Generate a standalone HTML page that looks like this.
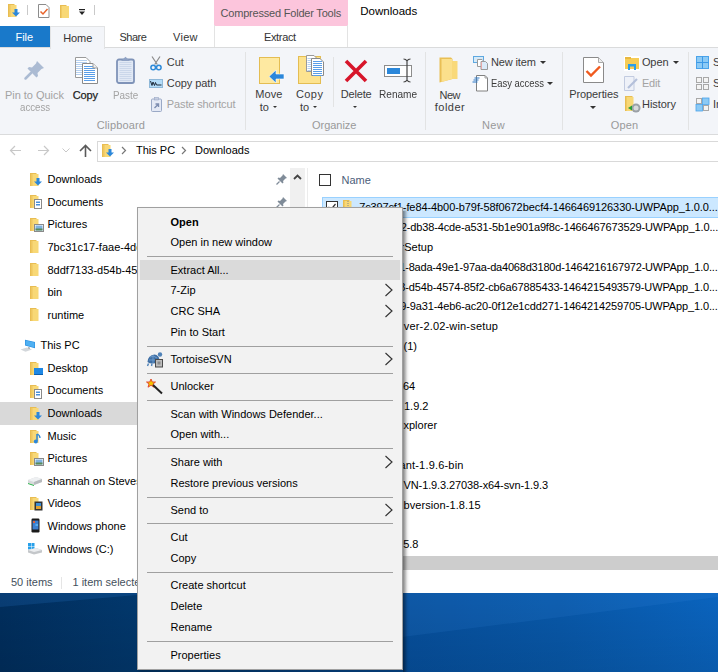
<!DOCTYPE html>
<html><head><meta charset="utf-8"><style>
html,body{margin:0;padding:0;background:#fff}
#root{position:relative;width:718px;height:672px;overflow:hidden;background:#fff;font-family:"Liberation Sans",sans-serif}
.t{position:absolute;white-space:nowrap;line-height:1.149;}
</style></head><body><div id="root">
<div style="position:absolute;left:0;top:0;width:718px;height:47px;background:#fff"></div>
<div style="position:absolute;left:214px;top:0;width:134px;height:25.5px;background:#fcc5dc"></div>
<div class="t" style="left:220.60px;top:7.37px;font-size:11px;color:#555;font-weight:normal;letter-spacing:-0.206px;">Compressed Folder Tools</div>
<div class="t" style="left:360.30px;top:4.91px;font-size:11.5px;color:#000;font-weight:normal;">Downloads</div>
<div style="position:absolute;left:0;top:26px;width:50px;height:21px;background:#1979ca"></div>
<div class="t" style="left:15.60px;top:30.87px;font-size:11px;color:#fff;font-weight:normal;letter-spacing:-0.078px;">File</div>
<div class="t" style="left:119.50px;top:30.87px;font-size:11px;color:#333;font-weight:normal;letter-spacing:-0.515px;">Share</div>
<div class="t" style="left:173.00px;top:30.87px;font-size:11px;color:#333;font-weight:normal;letter-spacing:0.281px;">View</div>
<div style="position:absolute;left:214px;top:25px;width:134px;height:22px;border-left:1px solid #e3e3e3;border-right:1px solid #e3e3e3;box-sizing:border-box"></div>
<div class="t" style="left:264.00px;top:31.17px;font-size:11px;color:#333;font-weight:normal;letter-spacing:-0.356px;">Extract</div>
<div style="position:absolute;left:0;top:47px;width:718px;height:88px;background:#f3f5f9;border-top:1px solid #dadbdc;border-bottom:1px solid #dadbdc;box-sizing:border-box"></div>
<div style="position:absolute;left:50px;top:26px;width:55px;height:23px;background:#f3f5f9;border:1px solid #e2e3e4;border-bottom:none;box-sizing:border-box"></div>
<div class="t" style="left:63.20px;top:31.57px;font-size:11px;color:#333;font-weight:normal;letter-spacing:-0.081px;">Home</div>
<div style="position:absolute;left:245px;top:52px;width:1px;height:78px;background:#e2e3e4"></div>
<div style="position:absolute;left:425px;top:52px;width:1px;height:78px;background:#e2e3e4"></div>
<div style="position:absolute;left:562px;top:52px;width:1px;height:78px;background:#e2e3e4"></div>
<div style="position:absolute;left:688px;top:52px;width:1px;height:78px;background:#e2e3e4"></div>
<div style="position:absolute;left:333px;top:57px;width:1px;height:50px;background:#e2e3e4"></div>
<div class="t" style="left:96.70px;top:118.87px;font-size:11px;color:#999;font-weight:normal;letter-spacing:0.138px;">Clipboard</div>
<div class="t" style="left:312.00px;top:118.87px;font-size:11px;color:#999;font-weight:normal;letter-spacing:-0.034px;">Organize</div>
<div class="t" style="left:482.00px;top:118.87px;font-size:11px;color:#999;font-weight:normal;letter-spacing:0.342px;">New</div>
<div class="t" style="left:610.80px;top:118.87px;font-size:11px;color:#999;font-weight:normal;letter-spacing:0.126px;">Open</div>
<div class="t" style="left:5.00px;top:88.57px;font-size:11px;color:#a3a3a3;font-weight:normal;letter-spacing:-0.028px;">Pin to Quick</div>
<div class="t" style="left:19.50px;top:100.57px;font-size:11px;color:#a3a3a3;font-weight:normal;transform:scaleX(0.8818);transform-origin:0 0;">access</div>
<div class="t" style="left:72.70px;top:88.57px;font-size:11px;color:#1e1e1e;font-weight:normal;letter-spacing:-0.129px;-webkit-text-stroke:0.25px #1e1e1e;">Copy</div>
<div class="t" style="left:112.80px;top:88.57px;font-size:11px;color:#a3a3a3;font-weight:normal;transform:scaleX(0.8991);transform-origin:0 0;">Paste</div>
<div class="t" style="left:166.80px;top:55.57px;font-size:11px;color:#3b3b3b;font-weight:normal;letter-spacing:-0.012px;">Cut</div>
<div class="t" style="left:166.80px;top:76.57px;font-size:11px;color:#3b3b3b;font-weight:normal;letter-spacing:-0.057px;">Copy path</div>
<div class="t" style="left:166.80px;top:97.57px;font-size:11px;color:#a3a3a3;font-weight:normal;letter-spacing:-0.125px;">Paste shortcut</div>
<div class="t" style="left:255.30px;top:88.07px;font-size:11px;color:#3b3b3b;font-weight:normal;letter-spacing:0.065px;">Move</div>
<div class="t" style="left:259.80px;top:101.07px;font-size:11px;color:#3b3b3b;font-weight:normal;">to</div>
<div class="t" style="left:295.90px;top:88.07px;font-size:11px;color:#3b3b3b;font-weight:normal;letter-spacing:0.438px;">Copy</div>
<div class="t" style="left:300.00px;top:101.07px;font-size:11px;color:#3b3b3b;font-weight:normal;">to</div>
<div class="t" style="left:340.80px;top:88.07px;font-size:11px;color:#3b3b3b;font-weight:normal;letter-spacing:-0.179px;">Delete</div>
<div class="t" style="left:378.70px;top:88.07px;font-size:11px;color:#3b3b3b;font-weight:normal;transform:scaleX(0.9163);transform-origin:0 0;">Rename</div>
<div class="t" style="left:439.60px;top:88.57px;font-size:11px;color:#3b3b3b;font-weight:normal;letter-spacing:-0.558px;">New</div>
<div class="t" style="left:434.70px;top:100.57px;font-size:11px;color:#3b3b3b;font-weight:normal;letter-spacing:0.514px;">folder</div>
<div class="t" style="left:490.90px;top:55.57px;font-size:11px;color:#3b3b3b;font-weight:normal;letter-spacing:-0.121px;">New item</div>
<div class="t" style="left:490.90px;top:76.57px;font-size:11px;color:#3b3b3b;font-weight:normal;transform:scaleX(0.8567);transform-origin:0 0;">Easy access</div>
<div class="t" style="left:569.20px;top:88.07px;font-size:11px;color:#3b3b3b;font-weight:normal;letter-spacing:-0.093px;">Properties</div>
<div class="t" style="left:641.90px;top:55.57px;font-size:11px;color:#3b3b3b;font-weight:normal;letter-spacing:-0.074px;">Open</div>
<div class="t" style="left:642.00px;top:76.57px;font-size:11px;color:#a3a3a3;font-weight:normal;letter-spacing:-0.223px;">Edit</div>
<div class="t" style="left:642.00px;top:97.77px;font-size:11px;color:#3b3b3b;font-weight:normal;letter-spacing:-0.056px;">History</div>
<div class="t" style="left:713.00px;top:55.57px;font-size:11px;color:#3b3b3b;font-weight:normal;">S</div>
<div class="t" style="left:713.00px;top:76.57px;font-size:11px;color:#3b3b3b;font-weight:normal;">S</div>
<div class="t" style="left:713.00px;top:97.57px;font-size:11px;color:#3b3b3b;font-weight:normal;">In</div>
<div style="position:absolute;left:272.5px;top:105.5px;width:0;height:0;border-left:2.5px solid transparent;border-right:2.5px solid transparent;border-top:2.5px solid #333"></div>
<div style="position:absolute;left:312.5px;top:105.5px;width:0;height:0;border-left:2.5px solid transparent;border-right:2.5px solid transparent;border-top:2.5px solid #333"></div>
<div style="position:absolute;left:352.5px;top:105.5px;width:0;height:0;border-left:2.5px solid transparent;border-right:2.5px solid transparent;border-top:2.5px solid #333"></div>
<div style="position:absolute;left:540px;top:61px;width:0;height:0;border-left:3.0px solid transparent;border-right:3.0px solid transparent;border-top:3.0px solid #333"></div>
<div style="position:absolute;left:547px;top:82px;width:0;height:0;border-left:3.0px solid transparent;border-right:3.0px solid transparent;border-top:3.0px solid #333"></div>
<div style="position:absolute;left:590px;top:106px;width:0;height:0;border-left:3.0px solid transparent;border-right:3.0px solid transparent;border-top:3.0px solid #333"></div>
<div style="position:absolute;left:673px;top:61px;width:0;height:0;border-left:3.0px solid transparent;border-right:3.0px solid transparent;border-top:3.0px solid #333"></div>
<div style="position:absolute;left:97px;top:141px;width:640px;height:20.5px;border:1px solid #d9d9d9;box-sizing:border-box;background:#fff"></div>
<div class="t" style="left:136.00px;top:144.37px;font-size:11px;color:#000;font-weight:normal;">This PC</div>
<div class="t" style="left:195.00px;top:144.37px;font-size:11px;color:#000;font-weight:normal;">Downloads</div>
<div style="position:absolute;left:0;top:402px;width:288px;height:23px;background:#d9d9d9"></div>
<div style="position:absolute;left:290px;top:168px;width:15px;height:402px;background:#f0f0f0"></div>
<div style="position:absolute;left:307px;top:168px;width:1px;height:402px;background:#ececec"></div>
<div class="t" style="left:47.50px;top:173.17px;font-size:11px;color:#000;font-weight:normal;">Downloads</div>
<div class="t" style="left:47.50px;top:195.77px;font-size:11px;color:#000;font-weight:normal;">Documents</div>
<div class="t" style="left:47.50px;top:218.37px;font-size:11px;color:#000;font-weight:normal;">Pictures</div>
<div class="t" style="left:47.50px;top:240.97px;font-size:11px;color:#000;font-weight:normal;">7bc31c17-faae-4dd0-b1a3</div>
<div class="t" style="left:47.50px;top:263.57px;font-size:11px;color:#000;font-weight:normal;">8ddf7133-d54b-4574-85f2</div>
<div class="t" style="left:47.50px;top:286.17px;font-size:11px;color:#000;font-weight:normal;">bin</div>
<div class="t" style="left:47.50px;top:308.77px;font-size:11px;color:#000;font-weight:normal;">runtime</div>
<div class="t" style="left:40.50px;top:338.87px;font-size:11px;color:#000;font-weight:normal;">This PC</div>
<div class="t" style="left:47.50px;top:361.87px;font-size:11px;color:#000;font-weight:normal;">Desktop</div>
<div class="t" style="left:47.50px;top:384.47px;font-size:11px;color:#000;font-weight:normal;">Documents</div>
<div class="t" style="left:47.50px;top:407.07px;font-size:11px;color:#000;font-weight:normal;">Downloads</div>
<div class="t" style="left:47.50px;top:429.67px;font-size:11px;color:#000;font-weight:normal;">Music</div>
<div class="t" style="left:47.50px;top:452.27px;font-size:11px;color:#000;font-weight:normal;">Pictures</div>
<div class="t" style="left:47.50px;top:474.87px;font-size:11px;color:#000;font-weight:normal;">shannah on Steves-PC</div>
<div class="t" style="left:47.50px;top:497.47px;font-size:11px;color:#000;font-weight:normal;">Videos</div>
<div class="t" style="left:47.50px;top:520.07px;font-size:11px;color:#000;font-weight:normal;">Windows phone</div>
<div class="t" style="left:47.50px;top:542.67px;font-size:11px;color:#000;font-weight:normal;">Windows (C:)</div>
<div class="t" style="left:11.00px;top:576.17px;font-size:11px;color:#44505c;font-weight:normal;">50 items</div>
<div style="position:absolute;left:61px;top:577px;width:1px;height:12px;background:#e5e5e5"></div>
<div class="t" style="left:72.50px;top:576.17px;font-size:11px;color:#44505c;font-weight:normal;">1 item selected</div>
<div style="position:absolute;left:319px;top:174px;width:12px;height:12px;border:1px solid #333;box-sizing:border-box"></div>
<div class="t" style="left:341.50px;top:174.07px;font-size:11px;color:#4c607a;font-weight:normal;">Name</div>
<div style="position:absolute;left:322px;top:197px;width:400px;height:20.5px;background:#cce8ff;border:1px solid #99d1ff;box-sizing:border-box"></div>
<div class="t" style="left:359.30px;top:201.17px;font-size:11px;color:#000;font-weight:normal;letter-spacing:-0.165px;">7c397cf1</div>
<div class="t" style="left:400.80px;top:221.01px;font-size:11px;color:#000;font-weight:normal;letter-spacing:-0.137px;">2-db38-4cde-a531-5b1e901a9f8c-1466467673529-UWPApp_1.0...</div>
<div class="t" style="left:400.60px;top:240.85px;font-size:11px;color:#000;font-weight:normal;">rSetup</div>
<div class="t" style="left:399.30px;top:260.69px;font-size:11px;color:#000;font-weight:normal;letter-spacing:-0.196px;">1-8ada-49e1-97aa-da4068d3180d-1464216167972-UWPApp_1.0...</div>
<div class="t" style="left:399.30px;top:280.53px;font-size:11px;color:#000;font-weight:normal;letter-spacing:-0.130px;">3-d54b-4574-85f2-cb6a67885433-1464215493579-UWPApp_1.0...</div>
<div class="t" style="left:400.30px;top:300.37px;font-size:11px;color:#000;font-weight:normal;letter-spacing:-0.137px;">9-9a31-4eb6-ac20-0f12e1cdd271-1464214259705-UWPApp_1.0...</div>
<div class="t" style="left:403.80px;top:320.21px;font-size:11px;color:#000;font-weight:normal;letter-spacing:0.171px;">ver-2.02-win-setup</div>
<div class="t" style="left:403.50px;top:340.05px;font-size:11px;color:#000;font-weight:normal;">(1)</div>
<div class="t" style="left:403.00px;top:379.73px;font-size:11px;color:#000;font-weight:normal;">64</div>
<div class="t" style="left:404.00px;top:399.57px;font-size:11px;color:#000;font-weight:normal;">1.9.2</div>
<div class="t" style="left:403.50px;top:419.41px;font-size:11px;color:#000;font-weight:normal;">xplorer</div>
<div class="t" style="left:399.40px;top:459.09px;font-size:11px;color:#000;font-weight:normal;letter-spacing:0.186px;">ant-1.9.6-bin</div>
<div class="t" style="left:403.50px;top:478.93px;font-size:11px;color:#000;font-weight:normal;letter-spacing:-0.103px;">VN-1.9.3.27038-x64-svn-1.9.3</div>
<div class="t" style="left:403.50px;top:498.77px;font-size:11px;color:#000;font-weight:normal;letter-spacing:0.084px;">bversion-1.8.15</div>
<div class="t" style="left:403.20px;top:538.45px;font-size:11px;color:#000;font-weight:normal;">5.8</div>
<div class="t" style="left:402.80px;top:201.17px;font-size:11px;color:#000;font-weight:normal;letter-spacing:-0.081px;">-fe84-4b00-b79f-58f0672becf4-1466469126330-UWPApp_1.0.0...</div>
<div style="position:absolute;left:305px;top:556px;width:413px;height:14px;background:#cdcdcd"></div>
<svg style="position:absolute;left:0;top:593px" width="718" height="79" viewBox="0 593 718 79"><defs><linearGradient id="dg" x1="0" y1="0" x2="1" y2="0"><stop offset="0" stop-color="#012e5d"/><stop offset="0.19" stop-color="#02386d"/><stop offset="0.56" stop-color="#064f9c"/><stop offset="0.78" stop-color="#0858a9"/><stop offset="1" stop-color="#0a64bf"/></linearGradient><linearGradient id="dv" x1="0" y1="0" x2="0" y2="1"><stop offset="0" stop-color="#000" stop-opacity="0"/><stop offset="1" stop-color="#000" stop-opacity="0.10"/></linearGradient></defs><rect x="0" y="592" width="718" height="80" fill="url(#dg)"/><polygon points="0,593 160,593 0,607" fill="#2a78c8" opacity="0.22"/><polygon points="300,593 718,593 718,597 300,650" fill="#3a8ae0" opacity="0.16"/><rect x="0" y="592" width="718" height="80" fill="url(#dv)"/><rect x="0" y="592" width="718" height="1" fill="#002a58"/></svg>
<svg style="position:absolute;left:30px;top:172.5px;overflow:visible" width="14" height="14" viewBox="0 0 14 14"><path d="M0 0 H6 L7 1 V13 H0 Z" fill="#e8bd52"/><rect x="1.5" y="1" width="7" height="12" fill="#f8d876"/><rect x="1.5" y="1" width="1" height="12" fill="#edc35c"/><path d="M6.5 5 H9.5 V8.5 H12 L8 12.5 L4 8.5 H6.5 Z" fill="#2b87da"/></svg>
<svg style="position:absolute;left:30px;top:195px;overflow:visible" width="14" height="14" viewBox="0 0 14 14"><path d="M0 0 H6 L7 1 V13 H0 Z" fill="#e8bd52"/><rect x="1.5" y="1" width="7" height="12" fill="#f8d876"/><rect x="1.5" y="1" width="1" height="12" fill="#edc35c"/><rect x="4.5" y="4.5" width="7" height="9" fill="#fff" stroke="#8a8a8a"/><rect x="6" y="6.5" width="4" height="1.5" fill="#4a90d9"/><rect x="6" y="9" width="4" height="1.5" fill="#4a90d9"/></svg>
<svg style="position:absolute;left:30px;top:217.5px;overflow:visible" width="14" height="14" viewBox="0 0 14 14"><path d="M0 0 H6 L7 1 V13 H0 Z" fill="#e8bd52"/><rect x="1.5" y="1" width="7" height="12" fill="#f8d876"/><rect x="1.5" y="1" width="1" height="12" fill="#edc35c"/><rect x="4.5" y="6.5" width="9" height="7" fill="#fff" stroke="#8a8a8a"/><rect x="5.5" y="7.5" width="7" height="5" fill="#7fb2e0"/><rect x="5.5" y="10.5" width="7" height="2" fill="#5a8a5a"/></svg>
<svg style="position:absolute;left:30px;top:240.3px;overflow:visible" width="14" height="14" viewBox="0 0 14 14"><path d="M0 0 H6 L7 1 V13 H0 Z" fill="#e8bd52"/><rect x="1.5" y="1" width="7" height="12" fill="#f8d876"/><rect x="1.5" y="1" width="1" height="12" fill="#edc35c"/></svg>
<svg style="position:absolute;left:30px;top:262.9px;overflow:visible" width="14" height="14" viewBox="0 0 14 14"><path d="M0 0 H6 L7 1 V13 H0 Z" fill="#e8bd52"/><rect x="1.5" y="1" width="7" height="12" fill="#f8d876"/><rect x="1.5" y="1" width="1" height="12" fill="#edc35c"/></svg>
<svg style="position:absolute;left:30px;top:285.5px;overflow:visible" width="14" height="14" viewBox="0 0 14 14"><path d="M0 0 H6 L7 1 V13 H0 Z" fill="#e8bd52"/><rect x="1.5" y="1" width="7" height="12" fill="#f8d876"/><rect x="1.5" y="1" width="1" height="12" fill="#edc35c"/></svg>
<svg style="position:absolute;left:30px;top:308.1px;overflow:visible" width="14" height="14" viewBox="0 0 14 14"><path d="M0 0 H6 L7 1 V13 H0 Z" fill="#e8bd52"/><rect x="1.5" y="1" width="7" height="12" fill="#f8d876"/><rect x="1.5" y="1" width="1" height="12" fill="#edc35c"/></svg>
<svg style="position:absolute;left:19px;top:336px;overflow:visible" width="18" height="17" viewBox="0 0 18 17"><path d="M1.5 13.5 L8 11.5 L13 13.5 L6.5 15.8 Z" fill="#d3d7db"/><path d="M6 3.7 L16 6 V12.3 L6 9.6 Z" fill="#2a8fe0"/><path d="M6.6 4.6 L15.4 6.6 V11.5 L6.6 9 Z" fill="#4fb0f2"/><path d="M9 11 L11 11.6 V13 L9 12.5 Z" fill="#aab0b6"/></svg>
<svg style="position:absolute;left:30px;top:361.5px;overflow:visible" width="14" height="14" viewBox="0 0 14 14"><path d="M0 0 H6 L7 1 V13 H0 Z" fill="#e8bd52"/><rect x="1.5" y="1" width="7" height="12" fill="#f8d876"/><rect x="1.5" y="1" width="1" height="12" fill="#edc35c"/><rect x="4" y="6" width="9" height="7" fill="#1e88e5"/><rect x="4" y="12" width="9" height="1" fill="#0b5fb0"/></svg>
<svg style="position:absolute;left:30px;top:384.5px;overflow:visible" width="14" height="14" viewBox="0 0 14 14"><path d="M0 0 H6 L7 1 V13 H0 Z" fill="#e8bd52"/><rect x="1.5" y="1" width="7" height="12" fill="#f8d876"/><rect x="1.5" y="1" width="1" height="12" fill="#edc35c"/><rect x="4.5" y="4.5" width="7" height="9" fill="#fff" stroke="#8a8a8a"/><rect x="6" y="6.5" width="4" height="1.5" fill="#4a90d9"/><rect x="6" y="9" width="4" height="1.5" fill="#4a90d9"/></svg>
<svg style="position:absolute;left:30px;top:407px;overflow:visible" width="14" height="14" viewBox="0 0 14 14"><path d="M0 0 H6 L7 1 V13 H0 Z" fill="#e8bd52"/><rect x="1.5" y="1" width="7" height="12" fill="#f8d876"/><rect x="1.5" y="1" width="1" height="12" fill="#edc35c"/><path d="M6.5 5 H9.5 V8.5 H12 L8 12.5 L4 8.5 H6.5 Z" fill="#2b87da"/></svg>
<svg style="position:absolute;left:30px;top:429.5px;overflow:visible" width="14" height="14" viewBox="0 0 14 14"><path d="M0 0 H6 L7 1 V13 H0 Z" fill="#e8bd52"/><rect x="1.5" y="1" width="7" height="12" fill="#f8d876"/><rect x="1.5" y="1" width="1" height="12" fill="#edc35c"/><path d="M7 4 V11" stroke="#2b87da" stroke-width="1.5"/><circle cx="5.8" cy="11.5" r="2" fill="#2b87da"/><path d="M7 4 Q10 5 10 8" stroke="#2b87da" stroke-width="1.3" fill="none"/></svg>
<svg style="position:absolute;left:30px;top:452px;overflow:visible" width="14" height="14" viewBox="0 0 14 14"><path d="M0 0 H6 L7 1 V13 H0 Z" fill="#e8bd52"/><rect x="1.5" y="1" width="7" height="12" fill="#f8d876"/><rect x="1.5" y="1" width="1" height="12" fill="#edc35c"/><rect x="4.5" y="6.5" width="9" height="7" fill="#fff" stroke="#8a8a8a"/><rect x="5.5" y="7.5" width="7" height="5" fill="#7fb2e0"/><rect x="5.5" y="10.5" width="7" height="2" fill="#5a8a5a"/></svg>
<svg style="position:absolute;left:25.5px;top:474px;overflow:visible" width="18" height="14" viewBox="0 0 18 14"><path d="M2 6 L10 3 L16 5 L16 8 L8 11 L2 9 Z" fill="#d7d9db"/><path d="M2 6 L8 8 L16 5 L10 3 Z" fill="#eef0f2"/><path d="M2 9 L8 11 L8 12 L2 10 Z" fill="#2bb24a"/><path d="M8 8 L16 5 V8 L8 11 Z" fill="#b7babd"/></svg>
<svg style="position:absolute;left:30px;top:497px;overflow:visible" width="14" height="14" viewBox="0 0 14 14"><path d="M0 0 H6 L7 1 V13 H0 Z" fill="#e8bd52"/><rect x="1.5" y="1" width="7" height="12" fill="#f8d876"/><rect x="1.5" y="1" width="1" height="12" fill="#edc35c"/><rect x="4.5" y="4.5" width="8" height="9" fill="#333"/><rect x="6" y="6" width="5" height="6" fill="#3b8fd8"/><rect x="6" y="9" width="5" height="3" fill="#e0a030"/></svg>
<svg style="position:absolute;left:31px;top:518px;overflow:visible" width="10" height="15" viewBox="0 0 10 15"><rect x="0.5" y="0.5" width="8" height="14" rx="1.2" fill="#1a1a1a"/><rect x="1.5" y="2.5" width="6" height="9" fill="#3c7fd0"/><rect x="2" y="3" width="2" height="2" fill="#e0603a"/><rect x="4.5" y="6" width="2.5" height="2" fill="#55b0f0"/></svg>
<svg style="position:absolute;left:25.5px;top:542px;overflow:visible" width="18" height="14" viewBox="0 0 18 14"><rect x="2" y="1" width="3" height="3" fill="#27a0ea"/><rect x="5.5" y="1" width="3" height="3" fill="#27a0ea"/><rect x="2" y="4.5" width="3" height="3" fill="#27a0ea"/><rect x="5.5" y="4.5" width="3" height="3" fill="#27a0ea"/><path d="M2 8 L10 6 L16 8 L16 10.5 L8 12.5 L2 10.5 Z" fill="#c4c7ca"/><path d="M2 8 L8 10 L16 8 L10 6 Z" fill="#eceef0"/></svg>
<svg style="position:absolute;left:276px;top:173px;overflow:visible" width="12" height="12" viewBox="0 0 12 12"><path d="M7 1 L11 5 L9.5 5.5 L7 8 L7.5 9.5 L6.5 10.5 L1.5 5.5 L2.5 4.5 L4 5 L6.5 2.5 Z" fill="#808c99"/><path d="M3.5 8.5 L0.5 11.5" stroke="#808c99" stroke-width="1.2"/></svg>
<svg style="position:absolute;left:276px;top:195.5px;overflow:visible" width="12" height="12" viewBox="0 0 12 12"><path d="M7 1 L11 5 L9.5 5.5 L7 8 L7.5 9.5 L6.5 10.5 L1.5 5.5 L2.5 4.5 L4 5 L6.5 2.5 Z" fill="#808c99"/><path d="M3.5 8.5 L0.5 11.5" stroke="#808c99" stroke-width="1.2"/></svg>
<svg style="position:absolute;left:293px;top:174px;overflow:visible" width="9" height="6" viewBox="0 0 9 6"><path d="M1 5 L4.5 1.5 L8 5" fill="none" stroke="#444" stroke-width="1.8"/></svg>
<svg style="position:absolute;left:9px;top:145px;overflow:visible" width="13" height="11" viewBox="0 0 13 11"><path d="M12 5.5 H1.5 M6 1 L1.5 5.5 L6 10" fill="none" stroke="#c8c8c8" stroke-width="1.2"/></svg>
<svg style="position:absolute;left:37px;top:145px;overflow:visible" width="13" height="11" viewBox="0 0 13 11"><path d="M1 5.5 H11.5 M7 1 L11.5 5.5 L7 10" fill="none" stroke="#c8c8c8" stroke-width="1.2"/></svg>
<svg style="position:absolute;left:62px;top:148px;overflow:visible" width="8" height="5" viewBox="0 0 8 5"><path d="M0.5 0.5 L4 4 L7.5 0.5" fill="none" stroke="#c8c8c8" stroke-width="1"/></svg>
<svg style="position:absolute;left:79px;top:144px;overflow:visible" width="13" height="14" viewBox="0 0 13 14"><path d="M6.5 13 V1.8 M1 7 L6.5 1.5 L12 7" fill="none" stroke="#5a5a5a" stroke-width="1.6"/></svg>
<svg style="position:absolute;left:102px;top:143.5px;overflow:visible" width="14" height="14" viewBox="0 0 14 14"><path d="M0 0 H6 L7 1 V13 H0 Z" fill="#e8bd52"/><rect x="1.5" y="1" width="7" height="12" fill="#f8d876"/><rect x="1.5" y="1" width="1" height="12" fill="#edc35c"/><path d="M6.5 5 H9.5 V8.5 H12 L8 12.5 L4 8.5 H6.5 Z" fill="#2b87da"/></svg>
<svg style="position:absolute;left:121px;top:146px;overflow:visible" width="6" height="9" viewBox="0 0 6 9"><path d="M1 1 L4.5 4.5 L1 8" fill="none" stroke="#777" stroke-width="1.2"/></svg>
<svg style="position:absolute;left:181px;top:146px;overflow:visible" width="6" height="9" viewBox="0 0 6 9"><path d="M1 1 L4.5 4.5 L1 8" fill="none" stroke="#777" stroke-width="1.2"/></svg>
<svg style="position:absolute;left:8px;top:4px;overflow:visible" width="14" height="14" viewBox="0 0 14 14"><path d="M0 0 H6 L7 1 V13 H0 Z" fill="#e8bd52"/><rect x="1.5" y="1" width="7" height="12" fill="#f8d876"/><rect x="1.5" y="1" width="1" height="12" fill="#edc35c"/><path d="M6.5 5 H9.5 V8.5 H12 L8 12.5 L4 8.5 H6.5 Z" fill="#2b87da"/></svg>
<div style="position:absolute;left:27px;top:5px;width:1px;height:10px;background:#c9c9c9"></div>
<svg style="position:absolute;left:38px;top:4px;overflow:visible" width="12" height="14" viewBox="0 0 12 14"><path d="M0.5 0.5 H8 L11 3.5 V13.5 H0.5 Z" fill="#fff" stroke="#8c8c8c"/><path d="M2.5 7.5 L5 10 L9.5 5" fill="none" stroke="#e8642c" stroke-width="1.5"/></svg>
<svg style="position:absolute;left:60px;top:4.5px;overflow:visible" width="10" height="14" viewBox="0 0 10 14"><path d="M0 0 H6 L7 1 V13 H0 Z" fill="#e8bd52"/><rect x="1.5" y="1" width="7.5" height="12" fill="#f8d876"/></svg>
<svg style="position:absolute;left:78px;top:8px;overflow:visible" width="8" height="8" viewBox="0 0 8 8"><rect x="1" y="1" width="6" height="1.2" fill="#222"/><path d="M1 3.5 H7 L4 7 Z" fill="#222"/></svg>
<div style="position:absolute;left:94px;top:5px;width:1px;height:10px;background:#c9c9c9"></div>
<svg style="position:absolute;left:24px;top:60px;overflow:visible" width="21" height="20" viewBox="0 0 21 20"><path d="M13 1 L20 8 L17.5 9 L13.5 13 L14 16 L12.5 17.5 L3.5 8.5 L5 7 L8 7.5 L12 3.5 Z" fill="#abbbd3"/><path d="M7 13 L1.5 18.5" stroke="#abbbd3" stroke-width="2.5" stroke-linecap="round"/></svg>
<svg style="position:absolute;left:74px;top:56px;overflow:visible" width="24" height="28" viewBox="0 0 24 28"><path d="M1.5 1.5 H12 L16 5.5 V21.5 H1.5 Z" fill="#fff" stroke="#9a9a9a"/><rect x="2" y="4" width="11" height="1" fill="#b5d0f0"/><rect x="2" y="6" width="11" height="1" fill="#b5d0f0"/><rect x="2" y="8" width="11" height="1" fill="#b5d0f0"/><rect x="2" y="10" width="11" height="1" fill="#b5d0f0"/><rect x="2" y="12" width="11" height="1" fill="#b5d0f0"/><rect x="2" y="14" width="11" height="1" fill="#b5d0f0"/><rect x="2" y="16" width="11" height="1" fill="#b5d0f0"/><rect x="2" y="18" width="11" height="1" fill="#b5d0f0"/><path d="M8.5 7.5 H19 L23.5 12 V27.5 H8.5 Z" fill="#fff" stroke="#8a8a8a"/><rect x="10" y="10" width="11" height="1" fill="#5a9ee8"/><rect x="10" y="12" width="11" height="1" fill="#5a9ee8"/><rect x="10" y="14" width="11" height="1" fill="#5a9ee8"/><rect x="10" y="16" width="11" height="1" fill="#5a9ee8"/><rect x="10" y="18" width="11" height="1" fill="#5a9ee8"/><rect x="10" y="20" width="11" height="1" fill="#5a9ee8"/><rect x="10" y="22" width="11" height="1" fill="#5a9ee8"/><rect x="10" y="24" width="11" height="1" fill="#5a9ee8"/><path d="M19 7.5 V12 H23.5" fill="#eee" stroke="#9a9a9a"/></svg>
<svg style="position:absolute;left:116px;top:55.5px;overflow:visible" width="19" height="28" viewBox="0 0 19 28"><rect x="1" y="3.5" width="17" height="23.5" rx="2" fill="#e2e9f5" stroke="#7f93b8" stroke-width="1.8"/><rect x="3.5" y="6" width="12" height="0.8" fill="#c6d3e8"/><rect x="3.5" y="8" width="12" height="0.8" fill="#c6d3e8"/><rect x="3.5" y="10" width="12" height="0.8" fill="#c6d3e8"/><rect x="3.5" y="12" width="12" height="0.8" fill="#c6d3e8"/><rect x="3.5" y="14" width="12" height="0.8" fill="#c6d3e8"/><rect x="3.5" y="16" width="12" height="0.8" fill="#c6d3e8"/><rect x="3.5" y="18" width="12" height="0.8" fill="#c6d3e8"/><rect x="3.5" y="20" width="12" height="0.8" fill="#c6d3e8"/><rect x="3.5" y="22" width="12" height="0.8" fill="#c6d3e8"/><rect x="3.5" y="24" width="12" height="0.8" fill="#c6d3e8"/><path d="M5 5 L9.5 0.8 L14 5 Z" fill="#8fa2c4"/></svg>
<svg style="position:absolute;left:150px;top:55.5px;overflow:visible" width="12" height="15" viewBox="0 0 12 15"><path d="M2 0.5 L7.3 8.5 M10 0.5 L4.7 8.5" stroke="#8a8a8a" stroke-width="1.2"/><ellipse cx="3.2" cy="11.5" rx="2.3" ry="2.3" fill="none" stroke="#2e8ad8" stroke-width="1.5"/><ellipse cx="8.8" cy="11.5" rx="2.3" ry="2.3" fill="none" stroke="#2e8ad8" stroke-width="1.5"/></svg>
<svg style="position:absolute;left:149px;top:79px;overflow:visible" width="14" height="9" viewBox="0 0 14 9"><rect x="0.5" y="0.5" width="13" height="8" fill="#b3dcf8" stroke="#8fb8d8"/><path d="M1.5 2 L3 6.5 L4 3 L5.5 6.5 L6.5 3.5 L7.5 6 H12.5" fill="none" stroke="#1e2a3a" stroke-width="1"/></svg>
<svg style="position:absolute;left:150.5px;top:96.5px;overflow:visible" width="11" height="15" viewBox="0 0 11 15"><rect x="0.5" y="2" width="10" height="12.5" rx="1" fill="#e4e9f5" stroke="#9aa9c6"/><rect x="3.5" y="0.5" width="4" height="2.5" fill="#c5cde0" stroke="#9aa9c6" stroke-width="0.6"/><path d="M3.5 11 L7 7.5 M4.5 7 H7.5 V10" stroke="#7d8db0" stroke-width="1.4" fill="none"/></svg>
<svg style="position:absolute;left:258.5px;top:56.5px;overflow:visible" width="26" height="27" viewBox="0 0 26 27"><rect x="0.5" y="0.5" width="20" height="26" fill="#fde38f" stroke="#e4bd52"/><rect x="1" y="1" width="19" height="25" fill="#fff3c2" opacity="0.35"/><path d="M25 17 H17 V13 L10 19.5 L17 26 V22 H25 Z" fill="#2b87da" stroke="#fff" stroke-width="0.6"/></svg>
<svg style="position:absolute;left:298px;top:55px;overflow:visible" width="27" height="29" viewBox="0 0 27 29"><rect x="0.5" y="1.5" width="22" height="27" fill="#fde38f" stroke="#e4bd52"/><path d="M8.5 0.5 H16 L19 3.5 V16.5 H8.5 Z" fill="#fff" stroke="#9a9a9a"/><rect x="9.5" y="3" width="8" height="1" fill="#b5d0f0"/><rect x="9.5" y="5" width="8" height="1" fill="#b5d0f0"/><rect x="9.5" y="7" width="8" height="1" fill="#b5d0f0"/><rect x="9.5" y="9" width="8" height="1" fill="#b5d0f0"/><rect x="9.5" y="11" width="8" height="1" fill="#b5d0f0"/><rect x="9.5" y="13" width="8" height="1" fill="#b5d0f0"/><rect x="9.5" y="15" width="8" height="1" fill="#b5d0f0"/><path d="M13.5 3.5 H22 L25.5 7 V20.5 H13.5 Z" fill="#fff" stroke="#8a8a8a"/><rect x="15" y="6" width="9" height="1" fill="#5a9ee8"/><rect x="15" y="8" width="9" height="1" fill="#5a9ee8"/><rect x="15" y="10" width="9" height="1" fill="#5a9ee8"/><rect x="15" y="12" width="9" height="1" fill="#5a9ee8"/><rect x="15" y="14" width="9" height="1" fill="#5a9ee8"/><rect x="15" y="16" width="9" height="1" fill="#5a9ee8"/><rect x="15" y="18" width="9" height="1" fill="#5a9ee8"/><rect x="15" y="20" width="9" height="1" fill="#5a9ee8"/></svg>
<svg style="position:absolute;left:344px;top:58.5px;overflow:visible" width="24" height="24" viewBox="0 0 24 24"><path d="M2 2 L22 22 M22 2 L2 22" stroke="#d7152a" stroke-width="3.6"/></svg>
<svg style="position:absolute;left:383.5px;top:57.5px;overflow:visible" width="29" height="25" viewBox="0 0 29 25"><rect x="0.5" y="7.5" width="27" height="11" fill="#fff" stroke="#8c8c8c"/><rect x="3" y="10" width="13" height="6" fill="#2b87da"/><path d="M19.5 1 Q22 1 23 3 Q24 1 26.5 1 M23 3 V22 M19.5 24 Q22 24 23 22 Q24 24 26.5 24" fill="none" stroke="#444" stroke-width="1.2"/></svg>
<svg style="position:absolute;left:438.5px;top:57px;overflow:visible" width="19" height="26" viewBox="0 0 19 26"><path d="M0.5 0.5 H12 L13.5 2 V22 L0.5 25.5 Z" fill="#e9bf55"/><path d="M4 4 H18.5 V22 H4 Z" fill="#f9d97a"/><path d="M2.5 2 H13 V22 L2.5 25 Z" fill="#fbe08c"/></svg>
<svg style="position:absolute;left:472.5px;top:55.5px;overflow:visible" width="15" height="15" viewBox="0 0 15 15"><rect x="0.5" y="0.5" width="10" height="6" fill="#d6eaf8" stroke="#5ea8e0"/><path d="M4.5 3.5 H9 L10.5 5 V10.5 H4.5 Z" fill="#fff" stroke="#9a9a9a"/><path d="M8 5.5 H12.5 L14.5 7.5 V13.5 H8 Z" fill="#dbeaf8" stroke="#9a9a9a"/><path d="M8.5 6 V13" stroke="#f0a0a0" stroke-width="0.8"/></svg>
<svg style="position:absolute;left:471.5px;top:75px;overflow:visible" width="17" height="17" viewBox="0 0 17 17"><path d="M4.5 0.5 H13 L15.5 3 V16 H4.5 Z" fill="#fff" stroke="#808080"/><path d="M13 0.5 V3 H15.5" fill="none" stroke="#a0a0a0"/><path d="M2.5 3 H7.5 M1.5 5 H6.5 M0.5 7 H5.5" stroke="#2b78c8" stroke-width="1.1"/></svg>
<svg style="position:absolute;left:583px;top:57px;overflow:visible" width="22" height="27" viewBox="0 0 22 27"><path d="M0.5 0.5 H15.5 L20.5 5.5 V25.5 H0.5 Z" fill="#fff" stroke="#8a8a8a"/><path d="M15.5 0.5 V5.5 H20.5" fill="#eee" stroke="#a8a8a8"/><path d="M3.5 14 L8 18.5 L17 9.5" fill="none" stroke="#f05a1e" stroke-width="2.4"/></svg>
<svg style="position:absolute;left:623.5px;top:56px;overflow:visible" width="16" height="15" viewBox="0 0 16 15"><rect x="0" y="0" width="16" height="15" fill="#fff"/><rect x="1" y="2" width="14" height="11" fill="#f6cc55"/><rect x="1" y="1" width="6" height="2" fill="#e8b840"/><path d="M4 8 H12 V14 H10 V10.5 H6 V14 H4 Z" fill="#2b9ee8"/></svg>
<svg style="position:absolute;left:624px;top:75.5px;overflow:visible" width="15" height="15" viewBox="0 0 15 15"><path d="M0.5 0.5 H10 V14.5 H0.5 Z" fill="#eef1f8" stroke="#c2cbe0"/><path d="M4 12 L13 3" stroke="#b4c0da" stroke-width="2.2"/></svg>
<svg style="position:absolute;left:625px;top:96px;overflow:visible" width="16" height="17" viewBox="0 0 16 17"><path d="M0 0 H7 L8 1 V15 H0 Z" fill="#e8bd52"/><rect x="1.5" y="1" width="7" height="14" fill="#f8d876"/><circle cx="11" cy="12" r="4.5" fill="#9aa0a6"/><circle cx="11" cy="12" r="2.5" fill="#d8dadc"/><path d="M3 12 L7 9.5 V14.5 Z" fill="#2a9d3a"/></svg>
<svg style="position:absolute;left:696px;top:55.5px;overflow:visible" width="13" height="13" viewBox="0 0 13 13"><rect x="0.5" y="0.5" width="12" height="12" fill="#8ccaf5" stroke="#4aa3ea"/><path d="M6.5 0.5 V12.5 M0.5 6.5 H12.5" stroke="#3c98e6" stroke-width="1"/></svg>
<svg style="position:absolute;left:696px;top:77px;overflow:visible" width="13" height="13" viewBox="0 0 13 13"><rect x="0.5" y="0.5" width="5" height="5" fill="#f4f4f4" stroke="#a8a8a8"/><rect x="7.5" y="0.5" width="5" height="5" fill="#f4f4f4" stroke="#a8a8a8"/><rect x="0.5" y="7.5" width="5" height="5" fill="#f4f4f4" stroke="#a8a8a8"/><rect x="7.5" y="7.5" width="5" height="5" fill="#f4f4f4" stroke="#a8a8a8"/></svg>
<svg style="position:absolute;left:696px;top:97.5px;overflow:visible" width="13" height="13" viewBox="0 0 13 13"><rect x="0.5" y="0.5" width="5" height="5" fill="#f4f4f4" stroke="#a8a8a8"/><rect x="6.5" y="0" width="6.5" height="6.5" fill="#8ccaf5" stroke="#4aa3ea" stroke-width="0.8"/><rect x="0" y="6.5" width="6.5" height="6.5" fill="#8ccaf5" stroke="#4aa3ea" stroke-width="0.8"/><rect x="7.5" y="7.5" width="5" height="5" fill="#f4f4f4" stroke="#a8a8a8"/></svg>
<svg style="position:absolute;left:326px;top:201px;overflow:visible" width="12" height="12" viewBox="0 0 12 12"><rect x="0.5" y="0.5" width="11" height="11" fill="#fff" stroke="#333"/><path d="M2.5 6 L5 8.5 L9.5 3" fill="none" stroke="#333" stroke-width="1.2"/></svg>
<svg style="position:absolute;left:343px;top:199.5px;overflow:visible" width="9" height="14" viewBox="0 0 9 14"><path d="M0 0 H6 L7 1 V13 H0 Z" fill="#e8bd52"/><rect x="1.5" y="1" width="7" height="12" fill="#f8d876"/><path d="M5 1 V9" stroke="#888" stroke-width="1" stroke-dasharray="1 1"/></svg>
<div style="position:absolute;left:139px;top:209px;width:268px;height:464px;background:rgba(0,0,0,0.18);filter:blur(1.5px)"></div>
<div style="position:absolute;left:403px;top:211px;width:4px;height:461px;background:linear-gradient(90deg,rgba(0,0,0,0.35),rgba(0,0,0,0.12) 60%,rgba(0,0,0,0))"></div>
<div style="position:absolute;left:137px;top:207px;width:266px;height:463px;background:#f2f2f2;border:1px solid #a0a0a0;box-sizing:border-box"></div>
<div style="position:absolute;left:140px;top:260px;width:260px;height:19.6px;background:#dadada"></div>
<div class="t" style="left:170.50px;top:215.77px;font-size:11px;color:#000;font-weight:bold;">Open</div>
<div class="t" style="left:170.50px;top:236.27px;font-size:11px;color:#000;font-weight:normal;">Open in new window</div>
<div class="t" style="left:170.50px;top:263.97px;font-size:11px;color:#000;font-weight:normal;">Extract All...</div>
<div class="t" style="left:170.50px;top:284.37px;font-size:11px;color:#000;font-weight:normal;">7-Zip</div>
<div class="t" style="left:170.50px;top:304.77px;font-size:11px;color:#000;font-weight:normal;">CRC SHA</div>
<div class="t" style="left:170.50px;top:325.77px;font-size:11px;color:#000;font-weight:normal;">Pin to Start</div>
<div class="t" style="left:170.50px;top:353.07px;font-size:11px;color:#000;font-weight:normal;">TortoiseSVN</div>
<div class="t" style="left:170.50px;top:380.07px;font-size:11px;color:#000;font-weight:normal;">Unlocker</div>
<div class="t" style="left:170.50px;top:407.87px;font-size:11px;color:#000;font-weight:normal;">Scan with Windows Defender...</div>
<div class="t" style="left:170.50px;top:428.27px;font-size:11px;color:#000;font-weight:normal;">Open with...</div>
<div class="t" style="left:170.50px;top:456.17px;font-size:11px;color:#000;font-weight:normal;">Share with</div>
<div class="t" style="left:170.50px;top:476.77px;font-size:11px;color:#000;font-weight:normal;">Restore previous versions</div>
<div class="t" style="left:170.50px;top:503.67px;font-size:11px;color:#000;font-weight:normal;">Send to</div>
<div class="t" style="left:170.50px;top:531.27px;font-size:11px;color:#000;font-weight:normal;">Cut</div>
<div class="t" style="left:170.50px;top:552.27px;font-size:11px;color:#000;font-weight:normal;">Copy</div>
<div class="t" style="left:170.50px;top:579.37px;font-size:11px;color:#000;font-weight:normal;">Create shortcut</div>
<div class="t" style="left:170.50px;top:600.27px;font-size:11px;color:#000;font-weight:normal;">Delete</div>
<div class="t" style="left:170.50px;top:620.77px;font-size:11px;color:#000;font-weight:normal;">Rename</div>
<div class="t" style="left:170.50px;top:648.67px;font-size:11px;color:#000;font-weight:normal;">Properties</div>
<div style="position:absolute;left:147px;top:256.1px;width:246px;height:1px;background:#a0a0a0"></div>
<div style="position:absolute;left:147px;top:345.6px;width:246px;height:1px;background:#a0a0a0"></div>
<div style="position:absolute;left:147px;top:372.7px;width:246px;height:1px;background:#a0a0a0"></div>
<div style="position:absolute;left:147px;top:400.2px;width:246px;height:1px;background:#a0a0a0"></div>
<div style="position:absolute;left:147px;top:447.7px;width:246px;height:1px;background:#a0a0a0"></div>
<div style="position:absolute;left:147px;top:496.5px;width:246px;height:1px;background:#a0a0a0"></div>
<div style="position:absolute;left:147px;top:523.4px;width:246px;height:1px;background:#a0a0a0"></div>
<div style="position:absolute;left:147px;top:571.9px;width:246px;height:1px;background:#a0a0a0"></div>
<div style="position:absolute;left:147px;top:640.8px;width:246px;height:1px;background:#a0a0a0"></div>
<svg style="position:absolute;left:384px;top:283.3px" width="10" height="14" viewBox="0 0 10 14"><path d="M1.5 1 L8 7 L1.5 13" fill="none" stroke="#333" stroke-width="1.15"/></svg>
<svg style="position:absolute;left:384px;top:303.8px" width="10" height="14" viewBox="0 0 10 14"><path d="M1.5 1 L8 7 L1.5 13" fill="none" stroke="#333" stroke-width="1.15"/></svg>
<svg style="position:absolute;left:384px;top:352.0px" width="10" height="14" viewBox="0 0 10 14"><path d="M1.5 1 L8 7 L1.5 13" fill="none" stroke="#333" stroke-width="1.15"/></svg>
<svg style="position:absolute;left:384px;top:455.2px" width="10" height="14" viewBox="0 0 10 14"><path d="M1.5 1 L8 7 L1.5 13" fill="none" stroke="#333" stroke-width="1.15"/></svg>
<svg style="position:absolute;left:384px;top:502.7px" width="10" height="14" viewBox="0 0 10 14"><path d="M1.5 1 L8 7 L1.5 13" fill="none" stroke="#333" stroke-width="1.15"/></svg>
<svg style="position:absolute;left:146px;top:350px;overflow:visible" width="18" height="18" viewBox="0 0 18 18"><path d="M1.5 12 Q2 5 8.5 4.5 Q13 5 13.5 10 Q12 13.5 7 13.5 Q3 13.5 1.5 12 Z" fill="#3f6fa5"/><path d="M4 7 Q8 5 11 8 M3 10 H12 M7 5 V13" stroke="#6d9ccc" stroke-width="0.9" fill="none"/><circle cx="14" cy="4.5" r="2.2" fill="#4f82b8"/><path d="M2.5 13.5 L1.5 16 M6 13.5 L5.5 16" stroke="#4f82b8" stroke-width="1.4"/><rect x="9.5" y="9.5" width="7" height="7.5" fill="#bdbdbd" stroke="#4a4a4a" stroke-width="1"/><rect x="11.5" y="11.5" width="3" height="3" fill="#8a8a8a"/></svg>
<svg style="position:absolute;left:146px;top:378px;overflow:visible" width="18" height="17" viewBox="0 0 18 17"><path d="M5 1 L6.3 4 L9.5 4 L7 6 L8 9.2 L5 7.3 L2 9.2 L3 6 L0.5 4 L3.7 4 Z" fill="#f5c400" stroke="#e0402a" stroke-width="0.9"/><path d="M7 7 L16 15.5" stroke="#222" stroke-width="2"/></svg>
</div></body></html>
